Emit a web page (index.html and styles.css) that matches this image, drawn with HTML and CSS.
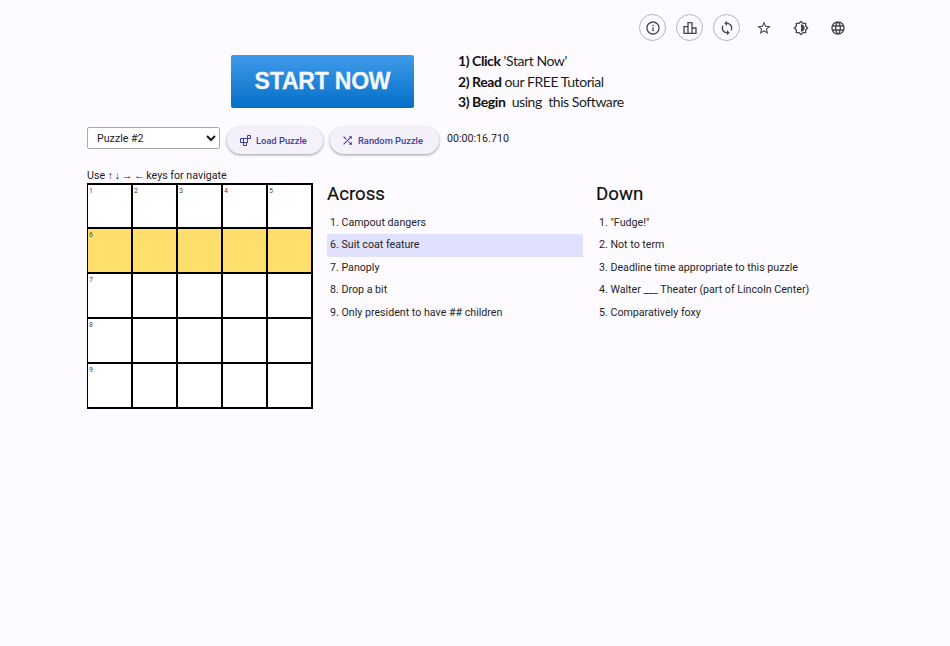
FILE: index.html
```html
<!DOCTYPE html>
<html lang="en">
<head>
<meta charset="utf-8">
<title>Crossword</title>
<link rel="stylesheet" href="styles.css">
</head>
<body>
<div class="page">
  <div class="toolbar">
    <span class="tool ring"><svg viewBox="0 0 24 24"><path d="M11 7h2v2h-2zm0 4h2v6h-2zm1-9C6.48 2 2 6.48 2 12s4.48 10 10 10 10-4.48 10-10S17.52 2 12 2zm0 18c-4.41 0-8-3.590-8-8s3.590-8 8-8 8 3.590 8 8-3.590 8-8 8z"/></svg></span>
    <span class="tool ring"><svg viewBox="0 0 24 24"><path d="M16 11V3H8v6H2v12h20V11h-6zM10 5h4v14h-4V5zm-6 6h4v8H4v-8zm16 8h-4v-6h4v6z"/></svg></span>
    <span class="tool ring"><svg viewBox="0 0 24 24"><path d="M12 4V1L8 5l4 4V6c3.310 0 6 2.690 6 6 0 1.010-.25 1.970-.7 2.800l1.460 1.460C19.540 15.030 20 13.570 20 12c0-4.420-3.580-8-8-8zm0 14c-3.310 0-6-2.690-6-6 0-1.010.25-1.970.7-2.800L5.240 7.740C4.460 8.970 4 10.430 4 12c0 4.420 3.580 8 8 8v3l4-4-4-4v3z"/></svg></span>
    <span class="tool"><svg viewBox="0 0 24 24"><path d="M22 9.240l-7.190-.62L12 2 9.190 8.630 2 9.240l5.460 4.730L5.820 21 12 17.270 18.180 21l-1.630-7.030L22 9.240zM12 15.400l-3.760 2.270 1-4.280-3.320-2.880 4.380-.38L12 6.100l1.710 4.040 4.380.38-3.320 2.880 1 4.280L12 15.400z"/></svg></span>
    <span class="tool"><svg viewBox="0 0 24 24"><path d="M20 8.690V4h-4.690L12 .69 8.690 4H4v4.690L.69 12 4 15.310V20h4.690L12 23.310 15.310 20H20v-4.690L23.310 12 20 8.690zm-2 5.790V18h-3.520L12 20.480 9.520 18H6v-3.520L3.520 12 6 9.520V6h3.520L12 3.520 14.480 6H18v3.520L20.480 12 18 14.480zM12 6.500v11c3.030 0 5.500-2.470 5.500-5.500S15.030 6.500 12 6.500z"/></svg></span>
    <span class="tool"><svg viewBox="0 0 24 24"><path d="M11.990 2C6.470 2 2 6.480 2 12s4.470 10 9.990 10C17.520 22 22 17.520 22 12S17.520 2 11.990 2zm6.930 6h-2.950c-.32-1.250-.78-2.450-1.380-3.560 1.840.63 3.370 1.910 4.330 3.560zM12 4.040c.83 1.200 1.480 2.530 1.910 3.960h-3.820c.43-1.430 1.080-2.760 1.910-3.960zM4.260 14C4.100 13.360 4 12.690 4 12s.1-1.360.26-2h3.380c-.08.66-.14 1.320-.14 2s.06 1.340.14 2H4.260zm.82 2h2.950c.32 1.250.78 2.450 1.380 3.560-1.840-.63-3.370-1.900-4.330-3.560zm2.950-8H5.080c.96-1.660 2.490-2.930 4.330-3.560C8.810 5.550 8.350 6.750 8.030 8zM12 19.960c-.83-1.200-1.480-2.530-1.910-3.960h3.820c-.43 1.430-1.080 2.760-1.910 3.960zM14.340 14H9.660c-.09-.66-.16-1.320-.16-2s.07-1.350.16-2h4.680c.09.65.16 1.320.16 2s-.07 1.340-.16 2zm.25 5.560c.6-1.110 1.060-2.310 1.380-3.560h2.950c-.96 1.650-2.490 2.930-4.330 3.560zM16.360 14c.08-.66.14-1.320.14-2s-.06-1.340-.14-2h3.380c.16.64.26 1.310.26 2s-.1 1.360-.26 2h-3.380z"/></svg></span>
  </div>

  <div class="promo">
    <div class="start-now">START NOW</div>
    <div class="steps">
      <div><b>1) Click</b> 'Start Now'</div>
      <div><b>2) Read</b> our FREE Tutorial</div>
      <div><b>3) Begin</b>&nbsp; using&nbsp; this Software</div>
    </div>
  </div>

  <div class="controls">
    <select class="picker"><option>Puzzle #2</option></select>
    <button class="action load"><svg viewBox="0 0 11 11"><path d="M.5 3.500h7v4h-7zM3.500 3.500v4M7.500.5h3v3h-3zM7.500 3.500v4M3.500 7.500v3h3v-3"/></svg>Load Puzzle</button>
    <button class="action shuffle"><svg viewBox="0 0 24 24"><path d="M10.590 9.170L5.410 4 4 5.410l5.170 5.170 1.420-1.410zM14.500 4l2.040 2.040L4 18.590 5.410 20 17.960 7.460 20 9.500V4h-5.500zm.33 9.410l-1.410 1.410 3.130 3.130L14.500 20H20v-5.500l-2.040 2.040-3.130-3.130z"/></svg>Random Puzzle</button>
    <span class="timer">00:00:16.710</span>
  </div>

  <div class="game">
    <div class="board">
      <div class="hint">Use <span class="arrows">↑ ↓ → ← </span>keys for navigate</div>
      <div class="grid">
        <div class="cell"><i>1</i></div><div class="cell"><i>2</i></div><div class="cell"><i>3</i></div><div class="cell"><i>4</i></div><div class="cell"><i>5</i></div>
        <div class="cell on"><i>6</i></div><div class="cell on"></div><div class="cell on"></div><div class="cell on"></div><div class="cell on"></div>
        <div class="cell"><i>7</i></div><div class="cell"></div><div class="cell"></div><div class="cell"></div><div class="cell"></div>
        <div class="cell"><i>8</i></div><div class="cell"></div><div class="cell"></div><div class="cell"></div><div class="cell"></div>
        <div class="cell"><i>9</i></div><div class="cell"></div><div class="cell"></div><div class="cell"></div><div class="cell"></div>
      </div>
    </div>
    <section class="clues">
      <h2>Across</h2>
      <ul>
        <li>1. Campout dangers</li>
        <li class="current">6. Suit coat feature</li>
        <li>7. Panoply</li>
        <li>8. Drop a bit</li>
        <li>9. Only president to have ## children</li>
      </ul>
    </section>
    <section class="clues">
      <h2>Down</h2>
      <ul>
        <li>1. "Fudge!"</li>
        <li>2. Not to term</li>
        <li>3. Deadline time appropriate to this puzzle</li>
        <li>4. Walter ___ Theater (part of Lincoln Center)</li>
        <li>5. Comparatively foxy</li>
      </ul>
    </section>
  </div>
</div>
</body>
</html>
```
FILE: styles.css
```css
* { box-sizing: border-box; }
html, body { margin: 0; height: 100%; }
body {
  background: #fdfbff;
  color: #1b1b1f;
  font-family: Roboto, "Liberation Sans", sans-serif;
  font-size: 10.670px;
  overflow: hidden;
}
.page { padding: 14px 0 0 87px; }
.toolbar {
  display: flex;
  gap: 10px;
  margin-left: 552px;
  height: 27px;
}
.tool {
  width: 27px;
  height: 27px;
  border-radius: 50%;
  display: flex;
  align-items: center;
  justify-content: center;
}
.ring { border: 1px solid #b4b2ba; }
.tool svg { width: 16px; height: 16px; fill: #46464f; }
.promo {
  display: flex;
  margin: 14px 0 0 144px;
  height: 53px;
}
.start-now {
  width: 183px;
  height: 53px;
  border-radius: 2px;
  background: linear-gradient(#3f9bea, #056fc8);
  color: #f2f8fd;
  font-family: "Liberation Sans", Arial, sans-serif;
  font-weight: 700;
  font-size: 23px;
  letter-spacing: -.2px;
  -webkit-text-stroke: .3px #f2f8fd;
  line-height: 53px;
  text-align: center;
}
.steps {
  margin: -4px 0 0 44px;
  font-family: Lato, "Open Sans", sans-serif;
  font-size: 14px;
  letter-spacing: -.43px;
  line-height: 20.500px;
  color: #1c1c1c;
}
.steps b { font-weight: 700; color: #111; }
.controls {
  display: flex;
  align-items: flex-start;
  margin-top: 19px;
}
.picker {
  width: 133px;
  height: 22px;
  padding-left: 5px;
  font-family: Roboto, sans-serif;
  font-size: 10.670px;
  color: #1b1b1f;
  background: #fff;
  border: 1px solid #aaa;
  border-radius: 2px;
}
.action {
  display: flex;
  align-items: center;
  height: 27px;
  margin-left: 7px;
  padding: 0;
  border: 0;
  border-radius: 14px;
  background: #f5f1fb;
  box-shadow: 0 1px 3px rgba(0,0,0,.4);
  color: #3f3a9e;
  font-family: Roboto, sans-serif;
  font-size: 9.330px;
  font-weight: 500;
}
.action.load { width: 96px; padding-left: 13px; gap: 5px; }
.action.shuffle { width: 109px; padding-left: 11px; gap: 4px; }
.action svg { width: 11px; height: 11px; fill: none; stroke: #3f3a9e; stroke-width: 1; }
.action.shuffle svg { width: 13px; height: 13px; stroke: none; fill: #3f3a9e; }
.timer { margin: 5px 0 0 8px; line-height: 14px; }
.game { display: flex; margin-top: 15px; }
.board { width: 240px; }
.hint { height: 14px; line-height: 14px; }
.arrows { word-spacing: -1px; }
.grid {
  display: grid;
  grid-template-columns: repeat(5, 45px);
  grid-template-rows: 44px repeat(4, 45px);
  width: 226px;
  border-top: 2px solid #000;
  border-left: 1px solid #000;
}
.cell {
  background: #fff;
  border-right: 2px solid #000;
  border-bottom: 2px solid #000;
}
.cell.on { background: #ffdf6b; }
.cell i {
  display: block;
  font-style: normal;
  font-size: 7px;
  line-height: 8px;
  padding: 2px 0 0 1px;
  color: #444;
}
.clues { width: 256px; margin-right: 13px; }
.clues h2 {
  margin: 0;
  padding-top: 13px;
  font-size: 18.670px;
  font-weight: 400;
  -webkit-text-stroke: .2px #111;
  line-height: 24px;
  color: #111;
}
.clues ul { list-style: none; margin: 5.500px 0 0; padding: 0; }
.clues li {
  height: 22.500px;
  line-height: 22.500px;
  padding-left: 3px;
  white-space: nowrap;
  color: #1f1f25;
}
.clues li.current { background: #e0e0ff; }
```
